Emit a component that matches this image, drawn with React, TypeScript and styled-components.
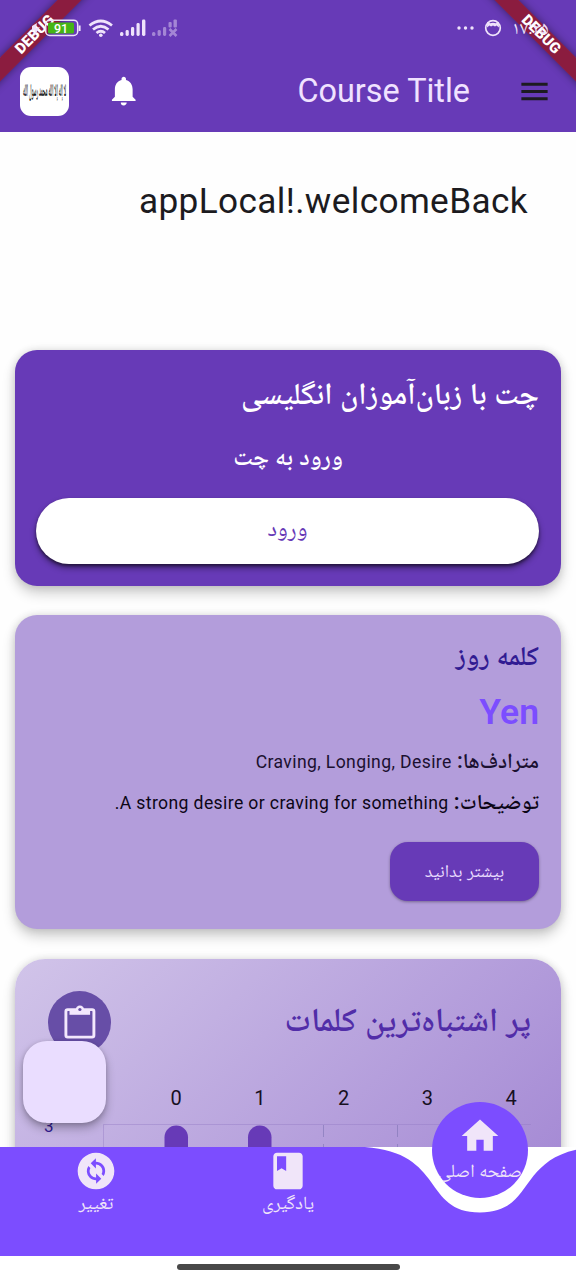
import React from "react";
import styled, { createGlobalStyle } from "styled-components";
import { MdChangeCircle, MdClass, MdHome, MdMenu, MdNotifications } from "react-icons/md";

const Global = createGlobalStyle`
  * { box-sizing: border-box; }
  body { margin: 0; background: #fff; }
`;

const Screen = styled.div`
  position: relative;
  width: 576px;
  height: 1280px;
  overflow: hidden;
  display: flex;
  flex-direction: column;
  direction: rtl;
  background: #fefefe;
  color: #1d1b20;
  font-family: Roboto, "Noto Naskh Arabic", "DejaVu Sans", sans-serif;
`;

const Header = styled.header`
  flex: none;
  height: 132px;
  background: #673ab7;
`;

const StatusBar = styled.div`
  position: relative;
  z-index: 2;
  height: 54px;
  padding: 1px 26px 0 32px;
  display: flex;
  align-items: center;
  justify-content: space-between;
  direction: ltr;
  color: #efe3fb;
`;

const StatusGroup = styled.div<{ $gap: number }>`
  display: flex;
  align-items: center;
  gap: ${(p) => p.$gap}px;
`;

const Clock = styled.span`
  font: 18px/20px Roboto, "Noto Naskh Arabic", sans-serif;
  width: 38px;
  white-space: nowrap;
`;

const AppBar = styled.div`
  height: 74px;
  padding: 0 19px 0 20px;
  display: flex;
  align-items: center;
  color: #fff;
`;

const MenuIcon = styled(MdMenu)`
  flex: none;
  margin-right: 5px;
  color: #1d1b20;
`;

const Title = styled.h1`
  margin: 0 47px 0 auto;
  font-size: 32.4px;
  line-height: 40px;
  font-weight: 400;
  color: #f0e2ff;
  direction: ltr;
  white-space: nowrap;
`;

const Bell = styled(MdNotifications)`
  flex: none;
`;

const Logo = styled.div`
  flex: none;
  width: 49px;
  height: 49px;
  margin-right: 37px;
  border-radius: 11px;
  background: #fff;
`;

const Ribbon = styled.div<{ $side: "left" | "right" }>`
  position: absolute;
  top: 26px;
  ${(p) => p.$side}: -65px;
  width: 200px;
  height: 17px;
  transform: rotate(${(p) => (p.$side === "left" ? -45 : 45)}deg);
  background: rgba(145, 23, 43, 0.86);
  box-shadow: 0 0 9px rgba(0, 0, 0, 0.45);
  color: #fff;
  font: 900 15px/17px Roboto, sans-serif;
  text-align: center;
  direction: ltr;
`;

const Content = styled.main`
  flex: none;
  height: 1015px;
  padding: 0 15px;
  overflow: hidden;
`;

const Welcome = styled.h2`
  margin: 0;
  height: 218px;
  padding: 48px 33px 0;
  font-size: 35.2px;
  line-height: 42px;
  letter-spacing: 0.38px;
  font-weight: 400;
  direction: ltr;
  text-align: right;
  color: #1c1b1f;
`;

const Card = styled.section<{ $bg: string; $h: number; $mt?: number; $r?: number }>`
  height: ${(p) => p.$h}px;
  margin-top: ${(p) => p.$mt || 0}px;
  padding: 22px;
  border-radius: ${(p) => p.$r || 22}px;
  background: ${(p) => p.$bg};
  box-shadow: 0 7px 13px rgba(0, 0, 0, 0.2), 0 0 8px rgba(0, 0, 0, 0.12);
`;

const Line = styled.div<{
  $size: number;
  $lh: number;
  $color: string;
  $mt?: number;
  $center?: boolean;
}>`
  margin-top: ${(p) => p.$mt || 0}px;
  font-size: ${(p) => p.$size}px;
  line-height: ${(p) => p.$lh}px;
  height: ${(p) => p.$lh}px;
  font-weight: 600;
  color: ${(p) => p.$color};
  text-align: ${(p) => (p.$center ? "center" : "right")};
  white-space: nowrap;
`;

const Latin = styled.span`
  font-size: 17.6px;
  font-weight: 400;
  letter-spacing: 0.38px;
`;

const EnterButton = styled.button`
  display: block;
  width: 503px;
  height: 66px;
  margin: 23px 0 0;
  padding: 0 0 4px;
  border: 0;
  border-radius: 33px;
  background: #fff;
  color: #673ab7;
  font: 400 23px/40px Roboto, "Noto Naskh Arabic", sans-serif;
  box-shadow: 0 4px 6px rgba(0, 0, 0, 0.4), 0 2px 3px rgba(0, 0, 0, 0.45);
`;

const MoreButton = styled.button`
  display: block;
  width: 149px;
  height: 59px;
  margin: 26px 0 0;
  padding: 0 0 1px;
  border: 0;
  border-radius: 18px;
  background: #673ab7;
  color: #eaddff;
  font: 400 18px/40px Roboto, "Noto Naskh Arabic", sans-serif;
  box-shadow: 0 1px 3px rgba(0, 0, 0, 0.35);
`;

const CardHead = styled.div`
  display: flex;
  justify-content: space-between;
  align-items: center;
  height: 64px;
  margin: 9px 8px 0 11px;
`;

const HeadTitle = styled(Line)`
  margin-bottom: 4px;
`;

const Badge = styled.div`
  width: 63px;
  height: 63px;
  border-radius: 50%;
  background: #674ea7;
  display: grid;
  place-items: center;
`;

const Ticks = styled.div`
  display: flex;
  justify-content: space-between;
  direction: ltr;
  width: 347px;
  margin: 32px 22px 0 0;
  font-size: 20px;
  line-height: 24px;
  color: #17101f;
  span {
    width: 12px;
    text-align: center;
  }
`;

const ChartRow = styled.div`
  display: flex;
  direction: ltr;
  margin-top: 13px;
  padding-left: 7px;
`;

const AxisLabel = styled.span`
  width: 58px;
  font-size: 17px;
  line-height: 20px;
  margin-top: -7px;
  color: #311b92;
`;

const NavBar = styled.nav`
  position: relative;
  flex: none;
  height: 109px;
  background: #fff;
  color: #f0e5f9;
`;

const Wave = styled.svg`
  display: block;
  position: absolute;
  inset: 0;
`;

const NavItems = styled.div`
  position: relative;
  display: grid;
  grid-template-columns: repeat(3, 192px);
  direction: ltr;
`;

const NavLabel = styled.span`
  direction: rtl;
  font-size: 18.6px;
  line-height: 20px;
  white-space: nowrap;
`;

const NavItem = styled.div`
  display: flex;
  flex-direction: column;
  align-items: center;
  padding-top: 2px;
`;

const ActiveItem = styled.div`
  width: 96px;
  height: 96px;
  margin: -45px auto 0;
  padding-top: 12px;
  border-radius: 50%;
  background: #7c4dff;
  overflow: hidden;
  display: flex;
  flex-direction: column;
  align-items: center;
  gap: 3px;
`;

const Fab = styled.div`
  position: absolute;
  left: 23px;
  top: 1041px;
  width: 83px;
  height: 82px;
  border-radius: 24px;
  background: #eaddff;
  box-shadow: 0 5px 10px rgba(0, 0, 0, 0.28), 0 1px 4px rgba(0, 0, 0, 0.15);
`;

const Gesture = styled.div`
  flex: none;
  height: 24px;
  padding-top: 8px;
  background: #fff;
  &::after {
    content: "";
    display: block;
    width: 223px;
    height: 6px;
    margin: 0 auto;
    border-radius: 3px;
    background: #484848;
  }
`;

const Battery = () => (
  <svg width="50" height="20" viewBox="32 17 50 20">
    <path d="M32 25l5-3-1 5 4-1-6 9 1-6-4 1z" fill="currentColor" />
    <rect x="45.7" y="19.2" width="32" height="15.3" rx="4" fill="none" stroke="currentColor" strokeWidth="1.5" />
    <rect x="48" y="21.5" width="26" height="11" rx="1.5" fill="#45b514" />
    <path d="M79.6 24.5v5.5" stroke="currentColor" strokeWidth="2" />
    <text x="61" y="31.6" fontSize="12.5" fontWeight="500" fontFamily="Roboto" textAnchor="middle" fill="#fff">
      91
    </text>
  </svg>
);

const Wifi = () => (
  <svg width="26" height="20" viewBox="88 17 26 20" fill="none" stroke="currentColor" strokeWidth="2.8">
    <path d="M89.5 24.5Q100.8 15.5 112 24.5" />
    <path d="M93 28.5Q100.8 22 108.5 28.5" />
    <path d="M96.5 32Q100.8 28.5 105 32" />
    <circle cx="100.8" cy="34.2" r="1.8" fill="currentColor" stroke="none" />
  </svg>
);

const Signal = () => (
  <svg width="26" height="18" viewBox="0 0 26 18" fill="currentColor">
    <rect x="0" y="13" width="3.4" height="4" rx="1.5" />
    <rect x="5.6" y="11" width="3.2" height="6" rx="1.4" />
    <rect x="11" y="8" width="3.2" height="9" rx="1.4" />
    <rect x="16.5" y="4" width="3.2" height="13" rx="1.4" />
    <rect x="22" y="0.5" width="3.4" height="16.5" rx="1.4" />
  </svg>
);

const NoSignal = () => (
  <svg width="27" height="18" viewBox="0 0 27 18" fill="currentColor" opacity="0.45">
    <rect x="0" y="13" width="3.4" height="4" rx="1.5" />
    <rect x="5.6" y="11" width="3.2" height="6" rx="1.4" />
    <rect x="11" y="8" width="3.2" height="9" rx="1.4" />
    <rect x="16.5" y="3" width="3.2" height="5.5" rx="1" />
    <rect x="21.5" y="0.5" width="3.4" height="8" rx="1" />
    <path d="M17.5 10l7 7M24.5 10l-7 7" stroke="currentColor" strokeWidth="2.6" />
  </svg>
);

const CatFace = () => (
  <svg width="18" height="18" viewBox="0 0 18 18">
    <circle cx="9" cy="9" r="7.3" fill="none" stroke="currentColor" strokeWidth="1.7" />
    <path
      d="M3.3 2.8L6 4.2Q9 3.2 12 4.2L14.7 2.8L15 8.5L12.5 6.5L11 7.5L9 6.5L7 7.5L5.5 6.5L3 8.5Z"
      fill="currentColor"
    />
  </svg>
);

const LogoMark = () => (
  <svg width="49" height="49" viewBox="0 0 49 49">
    <text
      x="24.5"
      y="29"
      textAnchor="middle"
      direction="rtl"
      fontFamily="'Noto Naskh Arabic', 'DejaVu Sans', serif"
      fontSize="18"
      fontWeight="700"
      textLength="43"
      lengthAdjust="spacingAndGlyphs"
      fill="#1a1a1a"
    >
      لا إله إلا الله محمد رسول الله
    </text>
  </svg>
);

const Clipboard = () => (
  <svg width="32" height="34" viewBox="0 0 32 34" fill="none" stroke="#f3e8fd">
    <rect x="1.9" y="4.6" width="28" height="27.5" rx="1.8" strokeWidth="2.9" />
    <path d="M5.5 4.5h20.6v5.3H5.5z" fill="#f3e8fd" stroke="none" />
    <circle cx="15.9" cy="4.7" r="4.2" fill="#f3e8fd" stroke="none" />
    <circle cx="15.9" cy="4.5" r="1.6" fill="#674ea7" stroke="none" />
  </svg>
);

const Chart = () => (
  <svg width="430" height="60" viewBox="102 1123 430 60">
    <path d="M103.5 1180V1124.5H531" fill="none" stroke="#9079c4" strokeOpacity="0.4" />
    <path d="M323.5 1125v50M397.5 1125v50" stroke="#7e74b4" strokeOpacity="0.6" strokeDasharray="12 7" />
    <rect x="164.5" y="1125.5" width="23.5" height="60" rx="11.7" fill="#673ab7" />
    <rect x="248" y="1125.5" width="23.5" height="60" rx="11.7" fill="#673ab7" />
  </svg>
);

export default function App() {
  return (
    <>
      <Global />
      <Screen>
        <Header>
          <StatusBar>
            <StatusGroup $gap={6}>
              <Battery />
              <Wifi />
              <Signal />
              <NoSignal />
            </StatusGroup>
            <StatusGroup $gap={10}>
              <svg width="17" height="4" fill="currentColor">
                <circle cx="2" cy="2" r="1.7" />
                <circle cx="8.5" cy="2" r="1.7" />
                <circle cx="15" cy="2" r="1.7" />
              </svg>
              <CatFace />
              <Clock>۱۷:۲۵</Clock>
            </StatusGroup>
          </StatusBar>
          <AppBar>
            <MenuIcon size={35} />
            <Title>Course Title</Title>
            <Bell size={35.5} />
            <Logo>
              <LogoMark />
            </Logo>
          </AppBar>
        </Header>

        <Content>
          <Welcome>appLocal!.welcomeBack</Welcome>

          <Card $bg="#673ab7" $h={236}>
            <Line $size={30.6} $lh={44} $color="#fff">چت با زبان‌آموزان انگلیسی</Line>
            <Line $size={24.5} $lh={36} $mt={23} $color="#fff" $center>ورود به چت</Line>
            <EnterButton>ورود</EnterButton>
          </Card>

          <Card $bg="#b39ddb" $h={314} $mt={29}>
            <Line $size={27.4} $lh={38} $color="#311b92">کلمه روز</Line>
            <Line $size={35.5} $lh={42} $mt={16} $color="#7c4dff">Yen</Line>
            <Line $size={21.4} $lh={28} $mt={14} $color="#1b1030">
              مترادف‌ها: <Latin>Craving, Longing, Desire</Latin>
            </Line>
            <Line $size={21.4} $lh={28} $mt={13} $color="#0c0616">
              توضیحات: <Latin>A strong desire or craving for something.</Latin>
            </Line>
            <MoreButton>بیشتر بدانید</MoreButton>
          </Card>

          <Card $bg="linear-gradient(135deg, #d1c4e9 0%, #9575cd 100%)" $h={480} $mt={30} $r={30}>
            <CardHead>
              <HeadTitle $size={33.4} $lh={48} $color="#512da8">پر اشتباه‌ترین کلمات</HeadTitle>
              <Badge>
                <Clipboard />
              </Badge>
            </CardHead>
            <Ticks>
              {[0, 1, 2, 3, 4].map((n) => (
                <span key={n}>{n}</span>
              ))}
            </Ticks>
            <ChartRow>
              <AxisLabel>3</AxisLabel>
              <Chart />
            </ChartRow>
          </Card>
        </Content>

        <Fab />

        <NavBar>
          <Wave width="576" height="109" viewBox="0 0 576 109">
            <path
              d="M0 0H364.8C445.4 5.5 422.4 65.5 480 65.5C537.6 65.5 514.6 5.5 595.2 0V109H0Z"
              fill="#7c4dff"
            />
          </Wave>
          <NavItems>
            <NavItem>
              <MdChangeCircle size={44} />
              <NavLabel>تغییر</NavLabel>
            </NavItem>
            <NavItem>
              <MdClass size={44} />
              <NavLabel>یادگیری</NavLabel>
            </NavItem>
            <ActiveItem>
              <MdHome size={44} />
              <NavLabel>صفحه اصلی</NavLabel>
            </ActiveItem>
          </NavItems>
        </NavBar>
        <Gesture />

        <Ribbon $side="left">DEBUG</Ribbon>
        <Ribbon $side="right">DEBUG</Ribbon>
      </Screen>
    </>
  );
}
